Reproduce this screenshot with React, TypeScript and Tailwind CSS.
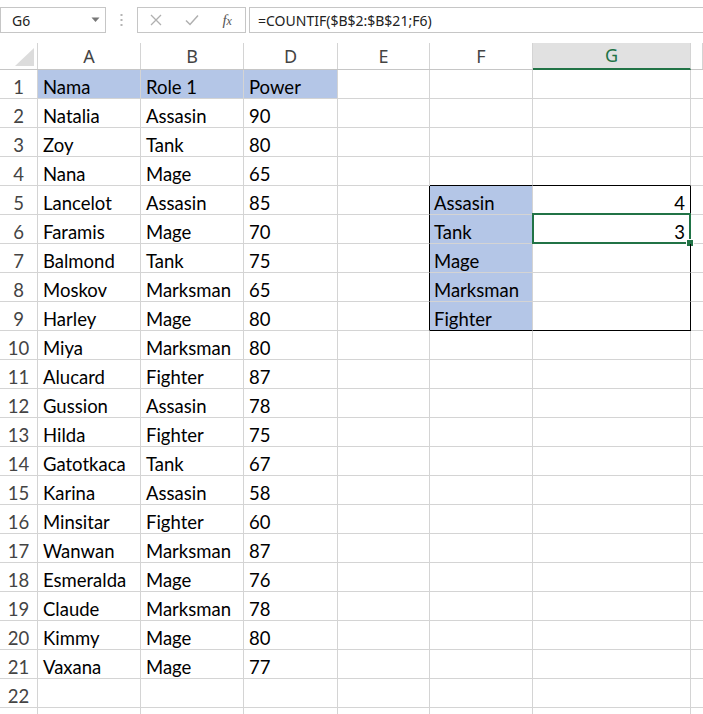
import React from 'react';

const rows: [string, string, string][] = [
  ['Nama', 'Role 1', 'Power'],
  ['Natalia', 'Assasin', '90'],
  ['Zoy', 'Tank', '80'],
  ['Nana', 'Mage', '65'],
  ['Lancelot', 'Assasin', '85'],
  ['Faramis', 'Mage', '70'],
  ['Balmond', 'Tank', '75'],
  ['Moskov', 'Marksman', '65'],
  ['Harley', 'Mage', '80'],
  ['Miya', 'Marksman', '80'],
  ['Alucard', 'Fighter', '87'],
  ['Gussion', 'Assasin', '78'],
  ['Hilda', 'Fighter', '75'],
  ['Gatotkaca', 'Tank', '67'],
  ['Karina', 'Assasin', '58'],
  ['Minsitar', 'Fighter', '60'],
  ['Wanwan', 'Marksman', '87'],
  ['Esmeralda', 'Mage', '76'],
  ['Claude', 'Marksman', '78'],
  ['Kimmy', 'Mage', '80'],
  ['Vaxana', 'Mage', '77'],
  ['', '', ''],
  ['', '', ''],
];

const summary: Record<number, [string, string]> = {
  5: ['Assasin', '4'],
  6: ['Tank', '3'],
  7: ['Mage', ''],
  8: ['Marksman', ''],
  9: ['Fighter', ''],
};

const cols = [
  { name: 'A', w: 'w-[103px]' },
  { name: 'B', w: 'w-[103px]' },
  { name: 'D', w: 'w-[94px]' },
  { name: 'E', w: 'w-[92px]' },
  { name: 'F', w: 'w-[103px]' },
  { name: 'G', w: 'w-[158px]' },
  { name: '', w: 'w-[12px]' },
];

const cellFont = "font-['Lato',sans-serif] text-[18.5px] leading-none pb-[2px] text-black";

function FormulaBar() {
  return (
    <div className="h-[43px] flex items-start pt-[7px] bg-white font-['Noto_Sans',sans-serif]">
      <div className="w-[106px] h-[26px] border border-[#c6c6c6] flex items-center justify-between pl-[11px] pr-[5px] text-[14px] text-[#222]">
        <span>G6</span>
        <svg width="9" height="6" viewBox="0 0 9 6">
          <path d="M0.5 0.5 L8.5 0.5 L4.5 5 Z" fill="#777" />
        </svg>
      </div>
      <div className="w-[31px] h-[26px] flex items-center justify-center">
        <svg width="3" height="14" viewBox="0 0 3 14">
          <rect x="0.5" y="1" width="2" height="2" fill="#b4b4b4" />
          <rect x="0.5" y="6" width="2" height="2" fill="#b4b4b4" />
          <rect x="0.5" y="11" width="2" height="2" fill="#b4b4b4" />
        </svg>
      </div>
      <div className="w-[109px] h-[26px] border border-[#c6c6c6] flex items-center">
        <div className="w-[36px] flex justify-center">
          <svg width="12" height="12" viewBox="0 0 12 12">
            <path d="M1 1 L11 11 M11 1 L1 11" stroke="#b0b0b0" strokeWidth="1.3" />
          </svg>
        </div>
        <div className="w-[36px] flex justify-center">
          <svg width="14" height="12" viewBox="0 0 14 12">
            <path d="M1 6.5 L5 10.5 L13 1.5" stroke="#b0b0b0" strokeWidth="1.5" fill="none" />
          </svg>
        </div>
        <div className="w-[36px] flex justify-center font-['Liberation_Serif',serif] italic text-[15px] text-[#555]">
          <span>f<span className="text-[12px]">x</span></span>
        </div>
      </div>
      <div className="ml-[3px] flex-1 h-[26px] border border-r-0 border-[#c6c6c6] flex items-center pl-[8px] text-[14px] text-[#222]">
        =COUNTIF($B$2:$B$21;F6)
      </div>
    </div>
  );
}

function HeaderRow() {
  return (
    <div className="flex h-[27px] border-b border-[#c6c6c6] font-['Noto_Sans',sans-serif] text-[18px] text-[#444]">
      <div className="w-[38px] shrink-0 border-r border-[#d4d4d4] flex items-end justify-end pr-[3px] pb-[3px]">
        <svg width="19" height="18" viewBox="0 0 19 18">
          <path d="M19 0 L19 18 L0 18 Z" fill="#dcdcdc" />
        </svg>
      </div>
      {cols.map((c) => (
        <div
          key={c.name || 'x'}
          className={`${c.w} shrink-0 flex items-center justify-center border-r border-[#d4d4d4] ${
            c.name === 'G' ? 'bg-[#e1e1e1] text-[#217346] border-b-2 border-b-[#217346] -mb-px' : ''
          }`}
        >
          {c.name}
        </div>
      ))}
    </div>
  );
}

function SheetRow({ n, data }: { n: number; data: [string, string, string] }) {
  const inBox = n >= 5 && n <= 9;
  const s = summary[n];
  return (
    <div className="flex h-[29px]">
      <div className="w-[38px] shrink-0 border-r border-b border-[#d4d4d4] flex items-end justify-center font-['Lato',sans-serif] text-[18.5px] leading-none pb-[2px] text-[#444]">
        {n <= 22 ? n : ''}
      </div>
      {data.map((v, i) => (
        <div
          key={i}
          className={`${cols[i].w} shrink-0 border-r border-b border-[#d4d4d4] flex items-end pl-[5px] ${cellFont} ${
            n === 1 ? 'bg-[#b4c6e7]' : ''
          }`}
        >
          {v}
        </div>
      ))}
      {/* E */}
      <div
        className={`w-[92px] shrink-0 border-b border-b-[#d4d4d4] border-r ${
          inBox ? 'border-r-black' : 'border-r-[#d4d4d4]'
        }`}
      />
      {/* F */}
      <div
        className={`w-[103px] shrink-0 border-r border-b border-r-[#d4d4d4] flex items-end pl-[4px] ${cellFont} ${
          inBox ? 'bg-[#b4c6e7]' : ''
        } ${n === 4 || n === 9 ? 'border-b-black' : 'border-b-[#d4d4d4]'}`}
      >
        {s ? s[0] : ''}
      </div>
      {/* G */}
      <div
        className={`relative w-[158px] shrink-0 border-r border-b flex items-end justify-end pr-[5px] ${cellFont} ${
          inBox ? 'border-r-black' : 'border-r-[#d4d4d4]'
        } ${n === 4 || n === 9 ? 'border-b-black' : 'border-b-[#d4d4d4]'}`}
      >
        {s ? s[1] : ''}
        {n === 6 && (
          <>
            <div className="absolute -top-[2px] -left-[1px] -right-[1px] -bottom-[1px] border-2 border-[#217346] pointer-events-none" />
            <div className="absolute -right-[4px] -bottom-[4px] w-[6px] h-[6px] bg-[#217346] border border-white box-content" />
          </>
        )}
      </div>
      <div className="w-[12px] shrink-0 border-b border-[#d4d4d4]" />
    </div>
  );
}

export default function App() {
  return (
    <div className="w-[703px] h-[714px] overflow-hidden bg-white">
      <FormulaBar />
      <HeaderRow />
      {rows.map((r, i) => (
        <SheetRow key={i} n={i + 1} data={r} />
      ))}
    </div>
  );
}
